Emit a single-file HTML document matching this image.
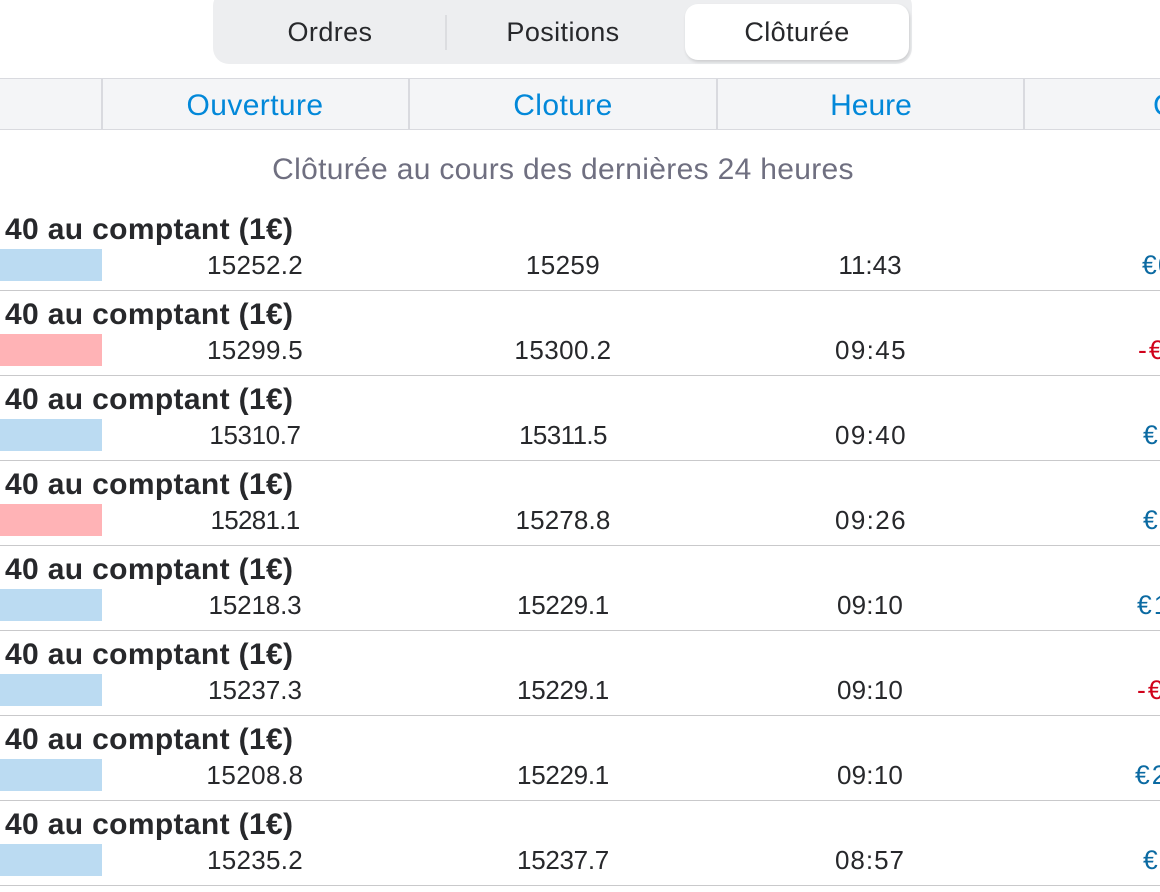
<!DOCTYPE html>
<html lang="fr">
<head>
<meta charset="utf-8">
<title>Clôturée</title>
<style>
html,body{margin:0;padding:0;background:#fff;}
#p{position:relative;width:1160px;height:892px;overflow:hidden;background:#fff;font-family:"Liberation Sans",sans-serif;}
#p div{position:absolute;white-space:nowrap;}
.seg{left:213px;top:-10px;width:699px;height:74px;background:#edeef0;border-radius:16px;}
.sel{left:685px;top:4px;width:224px;height:56px;background:#fff;border-radius:13px;box-shadow:1px 2px 3px rgba(0,0,0,.14);}
.sep{left:445px;top:15px;width:2px;height:35px;background:#dcdde0;}
.st{top:15px;height:34px;line-height:34px;font-size:27px;letter-spacing:.4px;color:#27282b;text-align:center;}
.hd{left:0;top:78px;width:1160px;height:50px;background:#f4f5f7;border-top:1.5px solid #d9dadf;border-bottom:1.5px solid #d9dadf;}
.v{top:79px;width:2px;height:50px;background:#d9dadf;}
.h{top:89px;height:34px;line-height:34px;font-size:30px;letter-spacing:.4px;color:#0288d9;text-align:center;}
.sub{left:200px;width:726px;top:153px;height:34px;line-height:34px;font-size:30px;color:#6f6f80;text-align:center;letter-spacing:.32px;}
.t{left:5px;height:32px;line-height:32px;font-size:30px;font-weight:bold;color:#27282b;letter-spacing:.35px;}
.b{left:0;width:102px;height:32px;}
.bl{background:#bbdbf2;}
.rd{background:#ffb3b6;}
.n{height:32px;line-height:32px;font-size:26px;color:#27282b;text-align:center;width:200px;}
.a{left:155px;}
.c{left:463px;}
.d{left:770px;}
.l{left:0;width:1160px;height:1px;background:#c9c9cb;}
.m{height:32px;line-height:32px;font-size:26.5px;letter-spacing:2px;}
.u{color:#0b6aa2;}
.r{color:#d0021b;}
</style>
</head>
<body>
<div id="p">
<div class="seg"></div>
<div class="sep"></div>
<div class="sel"></div>
<div class="st" style="left:230px;width:200px;">Ordres</div>
<div class="st" style="left:463px;width:200px;">Positions</div>
<div class="st" style="left:697px;width:200px;">Clôturée</div>

<div class="hd"></div>
<div class="v" style="left:101px"></div>
<div class="v" style="left:408px"></div>
<div class="v" style="left:716px"></div>
<div class="v" style="left:1023px"></div>
<div class="h" style="left:155px;width:200px;">Ouverture</div>
<div class="h" style="left:463px;width:200px;">Cloture</div>
<div class="h" style="left:771px;width:200px;letter-spacing:0;">Heure</div>
<div class="h" style="left:1153px;">C</div>

<div class="sub">Clôturée au cours des dernières 24 heures</div>

<div class="t" style="top:214px">40 au comptant (1€)</div>
<div class="b bl" style="top:249px"></div>
<div class="n a" style="top:249px;letter-spacing:.3px">15252.2</div>
<div class="n c" style="top:249px;letter-spacing:.4px">15259</div>
<div class="n d" style="top:249px">11:43</div>
<div class="m u" style="left:1142px;top:249px;letter-spacing:1.2px">€0</div>
<div class="l" style="top:290px"></div>

<div class="t" style="top:299px">40 au comptant (1€)</div>
<div class="b rd" style="top:334px"></div>
<div class="n a" style="top:334px;letter-spacing:.3px">15299.5</div>
<div class="n c" style="top:334px;letter-spacing:.45px">15300.2</div>
<div class="n d" style="top:334px;left:771px;letter-spacing:1.4px">09:45</div>
<div class="m r" style="left:1138px;top:334px">-€0</div>
<div class="l" style="top:375px"></div>

<div class="t" style="top:384px">40 au comptant (1€)</div>
<div class="b bl" style="top:419px"></div>
<div class="n a" style="top:419px;letter-spacing:-.4px">15310.7</div>
<div class="n c" style="top:419px;letter-spacing:-.6px">15311.5</div>
<div class="n d" style="top:419px;left:771px;letter-spacing:1.4px">09:40</div>
<div class="m u" style="left:1143px;top:419px">€0</div>
<div class="l" style="top:460px"></div>

<div class="t" style="top:469px">40 au comptant (1€)</div>
<div class="b rd" style="top:504px"></div>
<div class="n a" style="top:504px;letter-spacing:-.7px">15281.1</div>
<div class="n c" style="top:504px;letter-spacing:.15px">15278.8</div>
<div class="n d" style="top:504px;left:771px;letter-spacing:1.4px">09:26</div>
<div class="m u" style="left:1143px;top:504px">€0</div>
<div class="l" style="top:545px"></div>

<div class="t" style="top:554px">40 au comptant (1€)</div>
<div class="b bl" style="top:589px"></div>
<div class="n a" style="top:589px;letter-spacing:-.15px">15218.3</div>
<div class="n c" style="top:589px;letter-spacing:-.3px">15229.1</div>
<div class="n d" style="top:589px;letter-spacing:.2px">09:10</div>
<div class="m u" style="left:1137px;top:589px">€1</div>
<div class="l" style="top:630px"></div>

<div class="t" style="top:639px">40 au comptant (1€)</div>
<div class="b bl" style="top:674px"></div>
<div class="n a" style="top:674px">15237.3</div>
<div class="n c" style="top:674px;letter-spacing:-.3px">15229.1</div>
<div class="n d" style="top:674px;letter-spacing:.2px">09:10</div>
<div class="m r" style="left:1137px;top:674px">-€0</div>
<div class="l" style="top:715px"></div>

<div class="t" style="top:724px">40 au comptant (1€)</div>
<div class="b bl" style="top:759px"></div>
<div class="n a" style="top:759px;letter-spacing:.45px">15208.8</div>
<div class="n c" style="top:759px;letter-spacing:-.3px">15229.1</div>
<div class="n d" style="top:759px;letter-spacing:.2px">09:10</div>
<div class="m u" style="left:1135px;top:759px">€2</div>
<div class="l" style="top:800px"></div>

<div class="t" style="top:809px">40 au comptant (1€)</div>
<div class="b bl" style="top:844px"></div>
<div class="n a" style="top:844px;letter-spacing:.3px">15235.2</div>
<div class="n c" style="top:844px;letter-spacing:-.3px">15237.7</div>
<div class="n d" style="top:844px;letter-spacing:1px">08:57</div>
<div class="m u" style="left:1143px;top:844px">€0</div>
<div class="l" style="top:885px"></div>
</div>
</body>
</html>
